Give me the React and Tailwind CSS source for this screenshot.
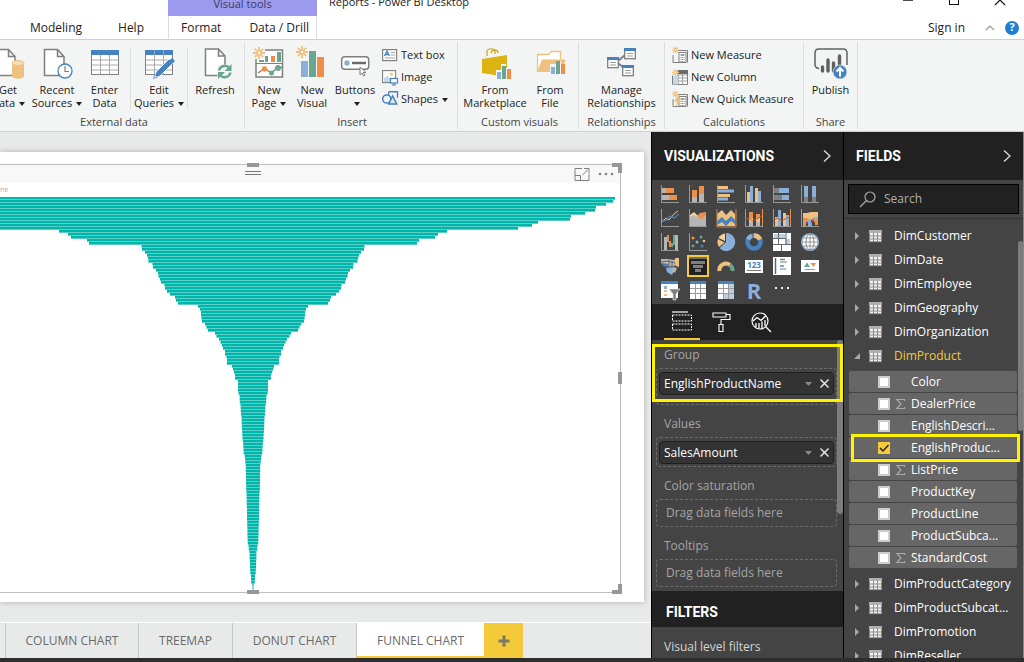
import React from "react";

/* ---------- shared colours for drawings ---------- */
const G = "#7f7f7f";
const BL = "#4682bd";
const LB = "#8ab0da";
const OR = "#ee8f45";
const PE = "#efc07f";
const GR = "#6aa58d";
const CR = "#f5d09a";
const DK = "#5f6160";

function Caret() {
  return (
    <svg className="ml-1 inline-block align-middle" width="6" height="4" viewBox="0 0 6 4" aria-hidden="true">
      <path d="M0 0h6L3 4z" fill="#222" />
    </svg>
  );
}

function Svg({ w, h, children }) {
  return (
    <svg width={w} height={h} viewBox={`0 0 ${w} ${h}`} className="block shrink-0 overflow-visible" aria-hidden="true">
      {children}
    </svg>
  );
}

function Spark({ x, y, r = 6 }) {
  const d = r * 0.7;
  return (
    <g stroke={PE} strokeWidth={r > 4 ? 1.8 : 1.2} transform={`translate(${x} ${y})`} fill="none">
      <path d={`M0 ${-r}V${r}M${-r} 0H${r}M${-d} ${-d}L${d} ${d}M${-d} ${d}L${d} ${-d}`} />
      <circle r={r * 0.3} fill="#fff" strokeWidth="1" />
    </g>
  );
}

/* ---------- ribbon icons (32 x 32) ---------- */
const page = <path d="M3.5 1.5h13l6.500 7v19H3.500zM16.500 1.500v7H23" fill="#fff" stroke={G} strokeWidth="1.5" />;

const GetIcon = () => (
  <Svg w={32} h={32}>
    {page}
    <path d="M20 15v13c0 3.500 12 3.500 12 0V15z" fill={PE} />
    <ellipse cx="26" cy="15" rx="6" ry="2.500" fill="#f7ddb2" stroke={PE} />
  </Svg>
);
const RecentIcon = () => (
  <Svg w={32} h={32}>
    {page}
    <circle cx="24" cy="23" r="7" fill="#fff" stroke={BL} strokeWidth="1.3" />
    <path d="M24 18v5.500h4" fill="none" stroke={G} strokeWidth="1.2" />
  </Svg>
);
const Grid = ({ pen }) => (
  <>
    <rect x="2.500" y="2.500" width="27" height="24" fill="#fff" stroke={G} />
    <path d="M3 12h26M3 17h26M3 22h26M11.500 6v20M20.500 6v20" stroke="#a9a9a9" fill="none" />
    <rect x="2" y="2" width="28" height="5" fill={BL} />
    {pen && <path d="M11.500 2v5M20.500 2v5" stroke="#7faad6" />}
  </>
);
const EnterIcon = () => (
  <Svg w={32} h={32}>
    <Grid />
  </Svg>
);
const EditIcon = () => (
  <Svg w={32} h={32}>
    <Grid pen />
    <path d="M11 30l2-6L26 11l4 4L17 28z" fill={BL} stroke="#f3f5f4" strokeWidth="1" />
    <path d="M26.500 12.500L29 10l3 3-2.500 2.500z" fill={BL} />
    <path d="M10.500 30.500l1.500-4 2.500 2.500z" fill="#fff" stroke={BL} strokeWidth=".8" />
  </Svg>
);
const RefreshIcon = () => (
  <Svg w={32} h={32}>
    <path d="M6.500 1h13l6.500 7v19.500H6.500zM19.500 1v7H26" fill="#fff" stroke={G} strokeWidth="1.500" />
    <rect x="18.500" y="16.500" width="14" height="14" fill="#f3f5f4" />
    <path d="M20 22.500a6 6 0 0 1 10.500-2.500M31.500 24.500a6 6 0 0 1-10.500 2.500" fill="none" stroke={GR} strokeWidth="2.400" />
    <path d="M32.500 16v7h-7zM19 31v-7h7z" fill={GR} />
  </Svg>
);
const NewPageIcon = () => (
  <Svg w={32} h={32}>
    <rect x="3" y="2" width="26.500" height="27" fill="#fff" stroke={G} strokeWidth="1.500" />
    <path d="M3 15.500h26" stroke={G} />
    <path d="M6 12h5v2H6zM12 8h3v6h-3zM24 4h4v10h-4z" fill={GR} />
    <rect x="18" y="8" width="4" height="6" fill={OR} />
    <path d="M5 25l6.500-4.500 7 4.500 6-5.500 5 0" fill="none" stroke={G} strokeWidth="1.300" />
    <circle cx="11.500" cy="21" r="2.700" fill={OR} />
    <circle cx="18.500" cy="25" r="2.500" fill={GR} />
    <circle cx="25" cy="20" r="3" fill={GR} />
    <rect x="0" y="0" width="12" height="11" fill="#f3f5f4" />
    <Spark x={6} y={5} r={6} />
  </Svg>
);
const NewVisualIcon = () => (
  <Svg w={32} h={32}>
    <rect x="5" y="13" width="7" height="16" fill={LB} />
    <rect x="13" y="3" width="7" height="26" fill={GR} />
    <rect x="21" y="9" width="7" height="20" fill={OR} />
    <Spark x={6} y={4} r={6} />
  </Svg>
);
const ButtonsIcon = () => (
  <Svg w={32} h={32}>
    <rect x="2.700" y="8.700" width="27" height="12.600" rx="3" fill="#fff" stroke={G} strokeWidth="1.500" />
    <circle cx="8" cy="15" r="2.700" fill={LB} />
    <path d="M13 15h14" stroke="#6b6b6b" strokeWidth="2.500" />
    <path d="M21 19v8l2-2 1.500 3 1.500-.8-1.500-2.700h2.500z" fill="#fff" stroke={G} />
  </Svg>
);
const MarketIcon = () => (
  <Svg w={32} h={32}>
    <path d="M8 8V3.500C8 0 16 0 16 3.500V6M12 5c1-4 7-4 7 0" fill="none" stroke="#d9ac1f" strokeWidth="1.400" />
    <path d="M3 11l25-4v22L3 25z" fill="#dcb311" />
    <path d="M17 22h5v-6h5v4h6v12H17z" fill="#f3f5f4" />
    <path d="M18 24h4v7h-4z" fill={LB} />
    <path d="M23 18h4v13h-4z" fill={GR} />
    <path d="M28 21h4v10h-4z" fill={OR} />
  </Svg>
);
const FileIcon = () => (
  <Svg w={32} h={32}>
    <path d="M3.500 24V6.500h11l3-3h9V11" fill="#fff" stroke={PE} strokeWidth="1.300" />
    <path d="M3 24L8 11.500h23.500L28 24z" fill={PE} />
    <path d="M16 16h6v-3h5v4h5v10H16z" fill="#f3f5f4" />
    <path d="M17 19h4v7h-4z" fill={LB} />
    <path d="M22 13h4v13h-4z" fill={GR} />
    <path d="M27 16h4v10h-4z" fill={OR} />
  </Svg>
);
function MiniTable({ x, y }) {
  return (
    <g transform={`translate(${x} ${y})`}>
      <rect x=".7" y=".7" width="10.600" height="10" fill="#fff" stroke={G} strokeWidth="1.300" />
      <rect width="12" height="3" fill={BL} />
      <path d="M3 5.500h6M3 8h6" stroke="#9a9a9a" />
    </g>
  );
}
const ManageIcon = () => (
  <Svg w={32} h={32}>
    <path d="M12 13l7-6M12 15l6 5" stroke={G} strokeWidth="2" />
    <MiniTable x={1} y={9} />
    <MiniTable x={18} y={0} />
    <MiniTable x={16} y={17} />
  </Svg>
);
const PublishIcon = () => (
  <Svg w={32} h={32}>
    <path d="M4 20.500c-3-.500-4-1.500-4-4V5c0-3 1-4 4-4h24c3 0 4 1 4 4v12" fill="none" stroke={DK} strokeWidth="1.500" />
    <path d="M7.500 19v4M13 12v11M18.500 15v8M24.500 8v12" stroke={DK} strokeWidth="3.400" strokeLinecap="round" />
    <circle cx="25" cy="24" r="7" fill={BL} stroke="#f3f5f4" strokeWidth=".6" />
    <path d="M25 28.500v-8M21.500 23.500l3.500-3.500 3.500 3.500" fill="none" stroke="#fff" strokeWidth="2" />
  </Svg>
);

/* ---------- ribbon icons (16 x 16) ---------- */
const TextIcon = () => (
  <Svg w={16} h={16}>
    <rect x=".6" y="2.600" width="14" height="11" fill="#fff" stroke={G} strokeWidth="1.200" />
    <path d="M9 5.500h4M9 8h4M3 11h10" stroke="#a0a0a0" />
    <path d="M2.500 9L5 4l2.500 5M3.500 7.500h3" stroke={BL} strokeWidth="1.300" fill="none" />
  </Svg>
);
const ImageIcon = () => (
  <Svg w={16} h={16}>
    <rect x=".6" y="1.600" width="13" height="12" fill="#fff" stroke={G} strokeWidth="1.100" />
    <circle cx="9.500" cy="5" r="1.500" fill={PE} />
    <path d="M2 13V9l3-2 3 2v4z" fill="#c6d9e8" />
    <rect x="8.500" y="9.500" width="7" height="4.500" fill="#fff" stroke={BL} strokeWidth="1.200" />
    <path d="M10 16h4M12 14v2" stroke={BL} />
  </Svg>
);
const ShapesIcon = () => (
  <Svg w={16} h={16}>
    <path d="M6.700 .7h8.800v6" fill="none" stroke={BL} strokeWidth="1.400" />
    <path d="M6.700 .7v3" stroke={BL} strokeWidth="1.400" />
    <circle cx="4.800" cy="8" r="4.100" fill="#f3f5f4" stroke={BL} strokeWidth="1.500" />
    <path d="M10.700 5l4 8h-8z" fill="#dbe8f4" stroke={BL} strokeWidth="1.500" />
  </Svg>
);
const MeasureIcon = ({ bolt }) => (
  <Svg w={16} h={16}>
    <path d="M1 8v7.500h6M6 3.500h9.500v12" stroke={G} fill="none" />
    <rect x="7" y="5.500" width="7" height="10" fill="#fff" stroke={G} />
    <path d="M8.500 8h4" stroke={G} strokeWidth="1.500" />
    <path d="M8.500 10.500h4M8.500 12.500h4M8.500 14.500h4" stroke={G} strokeDasharray="1 .6" />
    {bolt && <path d="M6 4L2 11h3l-1.500 5L9 9H6l2-5z" fill={PE} />}
    <Spark x={3.500} y={3} r={3.500} />
  </Svg>
);
const ColumnIcon = () => (
  <Svg w={16} h={16}>
    <path d="M.5 6.500v9h15V1.500H6v14" fill="#fff" stroke={G} />
    <rect x="1" y="7" width="5" height="8.500" fill="#c6d9e8" />
    <path d="M6 6h9M6 9h9M6 12h9M10.500 4v12" stroke="#a0a0a0" />
    <path d="M6 1h10v4H6z" fill="#6b6b6b" />
    <Spark x={3.500} y={3.500} r={3.500} />
  </Svg>
);

/* ---------- ribbon ---------- */
function BigButton({ icon, lines, caret, width }) {
  return (
    <button type="button" className={`flex shrink-0 flex-col items-center pt-1 whitespace-nowrap ${width}`}>
      {icon}
      <span className="mt-[3px] text-center leading-[13px]">
        {lines[0]}
        <br />
        {lines[1]}
        {caret && <Caret />}
      </span>
    </button>
  );
}
function SmallButton({ icon, label, caret }) {
  return (
    <button type="button" className="flex h-[22px] items-center gap-[3px] whitespace-nowrap">
      {icon}
      <span>
        {label}
        {caret && <Caret />}
      </span>
    </button>
  );
}
function Group({ title, className, children }) {
  return (
    <section className={`flex shrink-0 flex-col justify-between border-r border-[#dcdedd] pt-0.5 ${className}`}>
      <div className="flex">{children}</div>
      <h2 className="text-center leading-[14px] text-[#444]">{title}</h2>
    </section>
  );
}

function Ribbon() {
  return (
    <div className="flex h-[93px] shrink-0 overflow-hidden border-y border-[#cfd1d0] bg-[#f3f5f4] py-0.5 text-[11px] text-[#222]">
      <Group title="External data" className="-ml-[18px] w-[263px] pl-0.5">
        <BigButton width="w-12" icon={<GetIcon />} lines={["Get", "Data"]} caret />
        <BigButton width="w-[50px]" icon={<RecentIcon />} lines={["Recent", "Sources"]} caret />
        <BigButton width="w-[45px]" icon={<EnterIcon />} lines={["Enter", "Data"]} />
        <span className="mx-[3px] mt-1 border-l border-[#dcdedd]" />
        <BigButton width="w-[50px]" icon={<EditIcon />} lines={["Edit", "Queries"]} caret />
        <span className="mx-[3px] mt-1 border-l border-[#dcdedd]" />
        <BigButton width="w-12" icon={<RefreshIcon />} lines={["Refresh", ""]} />
      </Group>
      <Group title="Insert" className="w-[213px] pl-0.5">
        <BigButton width="w-11" icon={<NewPageIcon />} lines={["New", "Page"]} caret />
        <BigButton width="w-[42px]" icon={<NewVisualIcon />} lines={["New", "Visual"]} />
        <BigButton width="w-11" icon={<ButtonsIcon />} lines={["Buttons", ""]} caret />
        <div className="ml-[5px] flex flex-col">
          <SmallButton icon={<TextIcon />} label="Text box" />
          <SmallButton icon={<ImageIcon />} label="Image" />
          <SmallButton icon={<ShapesIcon />} label="Shapes" caret />
        </div>
      </Group>
      <Group title="Custom visuals" className="w-[121px] pl-[3px]">
        <BigButton width="w-[68px]" icon={<MarketIcon />} lines={["From", "Marketplace"]} />
        <BigButton width="w-[42px]" icon={<FileIcon />} lines={["From", "File"]} />
      </Group>
      <Group title="Relationships" className="w-[86px]">
        <BigButton width="w-full" icon={<ManageIcon />} lines={["Manage", "Relationships"]} />
      </Group>
      <Group title="Calculations" className="w-[139px] px-[7px]">
        <div className="flex flex-col">
          <SmallButton icon={<MeasureIcon />} label="New Measure" />
          <SmallButton icon={<ColumnIcon />} label="New Column" />
          <SmallButton icon={<MeasureIcon bolt />} label="New Quick Measure" />
        </div>
      </Group>
      <Group title="Share" className="w-[54px]">
        <BigButton width="w-full" icon={<PublishIcon />} lines={["Publish", ""]} />
      </Group>
    </div>
  );
}

function Header() {
  return (
    <header className="-mt-4 shrink-0 bg-white text-xs text-[#222]">
      <div className="flex h-8 items-end text-[11px]">
        <div className="ml-[168px] flex h-full w-[149px] items-end justify-center bg-[#9c9aef] pb-1 leading-4 text-[#3a3a66]">
          Visual tools
        </div>
        <div className="ml-3 pb-1.5 leading-4">Reports - Power BI Desktop</div>
        <div className="ml-auto flex h-full items-center gap-[34px] pr-[18px]">
          <button type="button" aria-label="Minimize">
            <Svg w={12} h={12}>
              <path d="M1 6h10" stroke="#111" strokeWidth="1.500" />
            </Svg>
          </button>
          <button type="button" aria-label="Maximize">
            <Svg w={12} h={12}>
              <rect x="1.500" y="1.500" width="9" height="9" fill="none" stroke="#111" />
            </Svg>
          </button>
          <button type="button" aria-label="Close">
            <Svg w={12} h={12}>
              <path d="M1 1l10 10M11 1L1 11" stroke="#111" strokeWidth="1.200" />
            </Svg>
          </button>
        </div>
      </div>
      <nav className="flex h-[23px] items-center">
        <div className="flex w-[168px] gap-9 pl-[30px]">
          <a href="#modeling">Modeling</a>
          <a href="#help">Help</a>
        </div>
        <div className="flex h-full w-[149px] items-center gap-7 border-x border-[#dcdcdc] pl-3">
          <a href="#format">Format</a>
          <a href="#data">Data / Drill</a>
        </div>
        <div className="ml-auto flex items-center pr-[5px]">
          <a href="#signin">Sign in</a>
          <button type="button" aria-label="Collapse ribbon" className="ml-5">
            <Svg w={10} h={8}>
              <path d="M1 6l4-4 4 4" fill="none" stroke="#999" strokeWidth="1.200" />
            </Svg>
          </button>
          <button
            type="button"
            aria-label="Help"
            className="ml-2.5 flex size-3.5 items-center justify-center rounded-full bg-[#1e7fd2] text-[11px] font-bold text-white"
          >
            ?
          </button>
        </div>
      </nav>
    </header>
  );
}

/* ---------- funnel chart ---------- */
const halfWidths = [
  362, 360, 353, 343, 342, 332, 318, 317, 285, 279, 265, 194, 185, 182, 166, 164, 111.500, 111, 108, 106, 105, 104.500,
  100.500, 100, 97, 95, 94.500, 93, 92, 88.500, 88, 86, 83, 78, 77, 75, 55, 53, 52, 52, 51.500, 51, 48, 46.500, 45, 38,
  36.500, 34, 32.500, 31, 30, 28, 28, 26.500, 26, 26, 21, 20, 19, 18, 18, 15, 15, 15, 15, 14.500, 13.400, 13.300, 13.200,
  12.500, 12.300, 12.200, 12, 11.500, 11.400, 11.300, 11.200, 11, 10.800, 10.600, 10.500, 10.200, 9.800, 9.600, 9.500, 9.200,
  8.300, 8, 7.600, 7.300, 7.200, 7.200, 7, 7, 7, 7, 6.800, 6.800, 6.600, 6.400, 6.400, 6.300, 6.300, 6.200, 6, 6, 6, 6, 5.800,
  5.800, 5.600, 5.600, 5.600, 5.400, 5.400, 5.200, 4.400, 4.200, 3.500, 3.400, 3.400, 3.200, 3, 3, 2.800, 2.600, 2, 2, 1.800,
  0.600, 0.500,
];

function Funnel() {
  return (
    <svg width="619" height="394" viewBox="0 0 619 394" className="block" role="img" aria-label="Funnel chart">
      {halfWidths.map((h, i) => (
        <rect key={i} x={253 - h} y={i * 3} width={h * 2} height="2.650" fill="#00b5aa" />
      ))}
    </svg>
  );
}

const sheets = [
  { name: "COLUMN CHART", width: "w-[133px]" },
  { name: "TREEMAP", width: "w-[94px]" },
  { name: "DONUT CHART", width: "w-[124px]" },
];

function Canvas() {
  return (
    <main className="flex min-w-0 flex-1 flex-col bg-[#e8eae9] pt-5">
      <div className="mr-[7px] flex flex-1 flex-col bg-white pt-3 pr-[23px] pb-[9px] shadow-[0_0_6px_rgba(0,0,0,0.25)]">
        <div className="relative flex-1 border-y border-r border-[#bdbdbd]">
          <div className="flex h-[18px] items-center justify-end gap-2 bg-[#f8f8f8] pr-1.5">
            <button type="button" aria-label="Focus mode">
              <Svg w={16} h={13}>
                <path d="M8 .5H1v12h14V6M1 7.500h5.500v5M8.500 7L14 1.500M10 .5h5v5" fill="none" stroke={G} />
              </Svg>
            </button>
            <button type="button" aria-label="More options">
              <Svg w={16} h={6}>
                <circle cx="2" cy="3" r="1.300" fill={G} />
                <circle cx="8" cy="3" r="1.300" fill={G} />
                <circle cx="14" cy="3" r="1.300" fill={G} />
              </Svg>
            </button>
          </div>
          <div className="h-3.5 text-[7px] leading-[14px] text-[#aaa]">ne</div>
          <Funnel />
          <span className="absolute -top-0.5 left-[247px] h-1 w-3 bg-[#979797]" />
          <span className="absolute top-1.5 left-[245px] h-1 w-4 border-y border-[#777]" />
          <span className="absolute -top-0.5 -right-0.5 size-2.5 border-t-4 border-r-4 border-[#979797]" />
          <span className="absolute top-[207px] -right-0.5 h-3 w-1 bg-[#979797]" />
          <span className="absolute -right-0.5 -bottom-0.5 size-2.5 border-r-4 border-b-4 border-[#979797]" />
          <span className="absolute -bottom-0.5 left-[247px] h-1 w-3 bg-[#979797]" />
        </div>
      </div>
      <nav className="mt-5 flex h-9 border-t border-white pl-[5px] text-xs text-[#6a6a6a]">
        {sheets.map((s) => (
          <button key={s.name} type="button" className={`border-l border-[#c6c8c7] whitespace-nowrap ${s.width}`}>
            {s.name}
          </button>
        ))}
        <button
          type="button"
          className="w-32 border-b-2 border-l border-b-[#f4c93a] border-l-[#c6c8c7] bg-white pt-0.5 whitespace-nowrap"
        >
          FUNNEL CHART
        </button>
        <button type="button" aria-label="New page" className="flex w-[39px] items-center justify-center bg-[#f4c93a]">
          <Svg w={12} h={12}>
            <path d="M6 .5v11M.5 6h11" stroke="#7b7766" strokeWidth="3" />
          </Svg>
        </button>
      </nav>
    </main>
  );
}

/* ---------- visualization icons (18 x 18) ---------- */
const V = ({ children }) => <Svg w={18} h={18}>{children}</Svg>;
const Axis = () => <path d="M.5 0v17.500H18" fill="none" stroke="#9a9a9a" />;
const S = "#b5b5b5";

const visuals = [
  ["Stacked bar", <V><Axis /><path d="M1 3h4v5H1zM1 10h7v5H1z" fill={S} /><path d="M5 3h8v5H5zM8 10h8v5H8z" fill={OR} /></V>],
  ["Stacked column", <V><Axis /><path d="M3 12h5v5H3zM10 9h5v8h-5z" fill={S} /><path d="M3 5h5v7H3zM10 1h5v8h-5z" fill={OR} /></V>],
  ["Clustered bar", <V><Axis /><path d="M1 1h10v3H1zM1 9h12v3H1z" fill={PE} /><path d="M1 4.500h16v3H1zM1 12.500h10v3H1z" fill={LB} /></V>],
  ["Clustered column", <V><Axis /><path d="M2 7h3v10H2zM10 3h3v14h-3z" fill={PE} /><path d="M5 1h3v16H5zM13 6h3v11h-3z" fill={LB} /></V>],
  ["100% stacked bar", <V><Axis /><path d="M1 3h5v5H1zM1 10h8v5H1z" fill={G} /><path d="M6 3h10v5H6zM9 10h7v5H9z" fill={LB} /></V>],
  ["100% stacked column", <V><Axis /><path d="M3 12h4v5H3zM11 12h4v5h-4z" fill={G} /><path d="M3 1h4v11H3zM11 1h4v11h-4z" fill={LB} /></V>],
  ["Line", <V><Axis /><path d="M1 13l4-4 3 2 5-6 4-3" fill="none" stroke={PE} /><path d="M1 10l3 2 5-5 4 2 5-4" fill="none" stroke={BL} strokeWidth="1.200" /></V>],
  ["Area", <V><Axis /><path d="M1 7l4-3 3 3 3-3 6-1v8H1z" fill={OR} /><path d="M1 7l4-2 7 5 5-3v10H1z" fill={S} /><path d="M1 6l4-3 4 4-2 1-2-2-4 2z" fill={CR} /></V>],
  ["Stacked area", <V><path d="M0 17V5l5-4 4 5 5-5 4 4v12z" fill={PE} /><path d="M0 12l5-4 4 4 5-5 4 4v4l-4-3-5 5-4-4-5 3z" fill={BL} /><path d="M0 0v18h19V0" fill="none" stroke="#c58b4d" /></V>],
  ["Line and stacked column", <V><Axis /><path d="M4 3h4v7H4zM11 5h4v5h-4z" fill={OR} /><path d="M4 9h4v8H4zM11 9h4v8h-4z" fill={PE} /><path d="M4 13h4v4H4zM11 13h4v4h-4z" fill={S} /><path d="M0 11l4-2 4 3 9-5" stroke="#c5592a" fill="none" /><path d="M17.500 0v17" stroke={OR} /></V>],
  ["Line and clustered column", <V><Axis /><path d="M2 8h3v9H2zM10 4h3v13h-3z" fill={PE} /><path d="M5 1h3v16H5zM13 6h3v11h-3z" fill={LB} /><path d="M0 12l4-3 5 3 8-5" stroke="#c5592a" fill="none" /><path d="M17.500 0v17" stroke={OR} /></V>],
  ["Ribbon", <V><Axis /><path d="M2 4h4l4-1h7v6h-4l-4 2H2z" fill={PE} /><path d="M2 9h4l3 2 4-2h4v7h-3v-3h-3v4H7v-4H5v4H2z" fill={OR} /><path d="M2 12h3v3H2zM7 10h3v4H7zM13 8h4v3h-4zM7 15h3v2H7z" fill={LB} /><path d="M5 13h2v2H5zM10 11h3v3h-3z" fill="#9c3f35" /></V>],
  ["Waterfall", <V><Axis /><path d="M3 4h3v13H3zM14 2h3v15h-3z" fill={S} /><path d="M6 2h2v7H6zM8 8h2v6H8z" fill={OR} /><path d="M10 10h2v4h-2zM12 2h2v10h-2z" fill={GR} /></V>],
  ["Scatter", <V><Axis /><circle cx="4" cy="5" r="1.600" fill={OR} /><circle cx="12" cy="4" r="1.500" fill={GR} /><circle cx="8" cy="9" r="1.500" fill={LB} /><circle cx="15" cy="8" r="1.300" fill={PE} /><circle cx="4" cy="13" r="1.400" fill={GR} /><circle cx="13" cy="13" r="1.600" fill={BL} /></V>],
  ["Pie", <V><path d="M9 9V0a9 9 0 1 1-6.500 15z" fill={LB} /><path d="M8 8V.5A8.500 8.500 0 0 0 1.500 5z" fill={CR} /><path d="M7.500 9.500L1 6a9 9 0 0 0 1 8z" fill={PE} /></V>],
  ["Donut", <V><circle cx="9" cy="9" r="6.500" fill="none" stroke={BL} strokeWidth="4.500" /><path d="M9 2.500a6.500 6.500 0 0 1 6 4" fill="none" stroke={PE} strokeWidth="4.500" /><path d="M3 6.500a6.500 6.500 0 0 1 4-3.700" fill="none" stroke={LB} strokeWidth="4.500" /></V>],
  ["Treemap", <V><path d="M0 0h18v18H0z" fill="#fff" /><path d="M1 1h4v4H1zM6 1h6v4H6zM6 6h11v5h-5V6z" fill="#bccfe0" /><path d="M5.500 0v11M0 5.500h13M13 0v11M0 11.500h18M8.500 11v7" stroke="#626a70" fill="none" /></V>],
  ["Map", <V><circle cx="9" cy="9" r="8.300" fill="#fff" stroke={LB} strokeWidth="1.500" /><ellipse cx="9" cy="9" rx="4" ry="8" fill="none" stroke={G} strokeWidth=".9" /><path d="M9 1v16M1 9h16M2.500 5h13M2.500 13h13" stroke={G} strokeWidth=".8" /></V>],
  ["Filled map", <V><path d="M0 2h7l7 1 1 5-4 3-6-1-5-4z" fill={S} /><path d="M1 6l6 1 1 4-5-1z" fill={BL} /><path d="M14 1h4v9l-3-1-1-4z" fill={PE} /><path d="M5 11l6-1 3 2-3 6-5-3z" fill={LB} /><path d="M12 10l4 1-2 5-3-2z" fill={S} /><path d="M0 5l7-1 7 2M1 9l7 1 6-1M8 3v8M11 4v7" stroke="#555" strokeWidth=".8" fill="none" /></V>],
  ["Funnel", <V><path d="M0 0h18v2H0z" fill="#6d6d6d" /><path d="M2 4h14v3H2zM4 8h10v3H4zM6 12h6v3H6z" fill={G} /></V>],
  ["Gauge", <V><path d="M2.500 14a6.500 6.500 0 0 1 10.500-6" fill="none" stroke={PE} strokeWidth="4" /><path d="M13 8a6.500 6.500 0 0 1 2.500 6" fill="none" stroke={GR} strokeWidth="4" /></V>],
  ["Card", <V><path d="M0 3h18v13H0z" fill="#fff" /><text x="9" y="10.500" textAnchor="middle" fontSize="8" fontWeight="700" fill={BL} fontFamily="Open Sans">123</text><path d="M2 13.500h14" stroke="#777" /></V>],
  ["Multi-row card", <V><path d="M0 0h18v18H0z" fill="#fff" /><path d="M2.500 1v16" stroke="#666" strokeWidth="1.500" /><path d="M7 2.500h5M7 9h4" stroke={G} strokeWidth="1.500" /><path d="M7 5h7M7 12h6" stroke={LB} strokeWidth="1.500" /></V>],
  ["KPI", <V><path d="M0 3h18v12H0z" fill="#fff" /><path d="M3 10l3-4.500L9 10z" fill={GR} /><path d="M9.500 6H15l-2.500 4z" fill={OR} /><path d="M4 12.500h10" stroke="#999" /></V>],
  ["Slicer", <V><path d="M0 0h17v17H0z" fill="#fff" /><path d="M0 0h17v3H0z" fill={BL} /><path d="M3 5h3v3H3z" fill={LB} /><path d="M3 9h3v2H3zM3 13h3v2H3z" fill={PE} /><path d="M8 8h11l-4 5v6h-3v-6z" fill={G} stroke="#eee" strokeWidth=".6" /></V>],
  ["Table", <V><path d="M1 1h16v17H1z" fill="#fff" /><path d="M1 0h16v3H1z" fill={BL} /><path d="M1 7.500h16M1 12.500h16M6.500 3v15M11.500 3v15" stroke="#9a9a9a" /></V>],
  ["Matrix", <V><path d="M1 1h16v17H1z" fill="#fff" /><path d="M1 0h16v3H1z" fill={BL} /><path d="M12 3h5v10h-5zM6 13h11v5H6z" fill="#bccfe0" /><path d="M1 7.500h16M1 12.500h16M6.500 3v15M11.500 3v15" stroke="#9a9a9a" /></V>],
  ["R script", <span className="text-[22px] leading-4 font-bold text-[#8ab0da]">R</span>],
  ["More visuals", <V><path d="M2 6h2v2H2zM8 6h2v2H8zM14 6h2v2h-2z" fill="#eee" /></V>],
];

function Chevron() {
  return (
    <Svg w={8} h={12}>
      <path d="M1 .5l6 5.500-6 5.500" fill="none" stroke="#ddd" strokeWidth="1.300" />
    </Svg>
  );
}

function PaneTitle({ title }) {
  return (
    <div className="flex h-12 shrink-0 items-center justify-between bg-[#212121] px-3">
      <h2 className="font-[Roboto,sans-serif] text-sm font-bold text-white">{title}</h2>
      <button type="button" aria-label={`Collapse ${title}`}>
        <Chevron />
      </button>
    </div>
  );
}

function Well({ label, field, tall }) {
  return (
    <section className="mb-1">
      <h3 className="flex h-7 items-center px-2 pt-0.5 text-[#a5a5a5]">{label}</h3>
      <div
        className={`rounded-sm border border-dashed border-[#6c6c6c] ${tall ? "h-[37px] p-0.5 pt-[3px]" : field ? "h-[30px] p-0.5 pt-[3px]" : "flex h-7 items-center px-[9px] text-[#a5a5a5]"}`}
      >
        {field ? (
          <div className="flex h-[23px] items-center rounded-sm border border-[#1f1f1f] bg-[#333] pl-1 text-white">
            <span>{field}</span>
            <button type="button" aria-label={`${field} options`} className="ml-auto">
              <Svg w={7} h={4}>
                <path d="M0 0h7L3.500 4z" fill="#8a8a8a" />
              </Svg>
            </button>
            <button type="button" aria-label={`Remove ${field}`} className="mr-1 ml-2">
              <Svg w={9} h={9}>
                <path d="M.5.5l8 8M8.500.5l-8 8" stroke="#eee" strokeWidth="1.400" />
              </Svg>
            </button>
          </div>
        ) : (
          "Drag data fields here"
        )}
      </div>
    </section>
  );
}

function Visualizations() {
  return (
    <aside className="flex w-[193px] shrink-0 flex-col overflow-hidden border-x border-black bg-[#444] text-xs">
      <PaneTitle title="VISUALIZATIONS" />
      <div className="grid h-[124px] shrink-0 grid-cols-[repeat(6,28px)] grid-rows-[repeat(5,24px)] py-0.5 pl-1">
        {visuals.map(([name, icon]) => (
          <button
            key={name}
            type="button"
            aria-label={name}
            className={`flex items-center justify-center ${name === "Funnel" ? "mx-[3px] my-px border-2 border-[#f4c93a] bg-[#212121]" : ""}`}
          >
            {icon}
          </button>
        ))}
      </div>
      <div className="flex h-9 shrink-0 gap-1 bg-[#212121] px-3">
        <button type="button" aria-label="Fields" className="flex w-9 items-center justify-center border-b-2 border-[#f4c93a]">
          <Svg w={20} h={20}>
            <path d="M0 1h16" stroke="#fff" strokeWidth="1.200" />
            <path d="M.5 4h19v6H.5zM.5 13h19v6H.5z" fill="none" stroke="#fff" strokeDasharray="2 1" />
          </Svg>
        </button>
        <button type="button" aria-label="Format" className="flex w-9 items-center justify-center">
          <Svg w={20} h={20}>
            <path d="M1 1h13v4H1zM14 2.500h4v5H9v5M7 12.500h4v7H7z" fill="none" stroke="#fff" strokeWidth="1.100" />
          </Svg>
        </button>
        <button type="button" aria-label="Analytics" className="flex w-9 items-center justify-center">
          <Svg w={20} h={20}>
            <circle cx="8" cy="9" r="8" fill="none" stroke="#fff" strokeWidth="1.200" />
            <path d="M1 9l4-3.500 4 3 5-5M13.500 14.500L19 20M4 15v-4M7 16.500V11M10 16.500v-7M13 14V8" fill="none" stroke="#fff" strokeWidth="1.300" />
          </Svg>
        </button>
      </div>
      <div className="relative h-[251px] shrink-0 pr-[6px] pl-1">
        <span className="absolute top-0 right-0 h-[174px] w-[6px] rounded-full bg-[#7c7c7c]" />
        <Well label="Group" field="EnglishProductName" tall />
        <Well label="Values" field="SalesAmount" />
        <Well label="Color saturation" />
        <Well label="Tooltips" />
        <span className="pointer-events-none absolute inset-x-0 top-1 h-[58px] border-3 border-[#fff200]" />
      </div>
      <h2 className="flex h-9 shrink-0 items-center bg-[#212121] px-3.5 pt-1.5 font-[Roboto,sans-serif] text-sm font-bold text-white">
        FILTERS
      </h2>
      <p className="px-3 pt-3 leading-4 text-[#d5d5d5]">Visual level filters</p>
    </aside>
  );
}

function TableRow({ name, open }) {
  return (
    <button type="button" className="flex h-6 w-full shrink-0 items-center pl-2.5 text-left">
      <Svg w={6} h={8}>
        <path d={open ? "M6 1v6H0z" : "M1 0l4 4-4 4z"} fill="#a8a8a8" />
      </Svg>
      <span className="ml-[9px]">
        <Svg w={13} h={12}>
          <path d="M0 0h13v12H0z" fill="#f2f2f2" />
          <path d="M0 0h13v3H0z" fill="#b0b0b0" />
          <path d="M0 6h13M0 9h13M4.500 3v9M8.500 3v9M.5 3v9M12.500 3v9M0 11.700h13" stroke="#888" />
        </Svg>
      </span>
      <span className={`ml-3 ${open ? "text-[#f4c93a]" : "text-white"}`}>{name}</span>
    </button>
  );
}

function FieldRow({ name, sum, checked }) {
  return (
    <label className="relative flex h-[21px] items-center rounded-xs bg-[#666] pl-[29px] text-white">
      <input
        type="checkbox"
        defaultChecked={checked}
        className="size-3 appearance-none border-2 border-[#ccc] bg-white checked:border-[#f4c93a] checked:bg-[#f4c93a]"
      />
      {checked && (
        <span className="pointer-events-none absolute left-[31px]">
          <Svg w={9} h={8}>
            <path d="M0 4l3 3 5.500-6" fill="none" stroke="#222" strokeWidth="1.500" />
          </Svg>
        </span>
      )}
      <span className="flex w-[21px] justify-center">
        {sum && (
          <Svg w={9} h={10}>
            <path d="M8.500 2V.5H.8L5 5 .8 9.500h7.700V8" fill="none" stroke="#aaa" strokeWidth="1.200" />
          </Svg>
        )}
      </span>
      {name}
      {checked && (
        <span className="pointer-events-none absolute -top-[3px] -right-[3px] left-0.5 z-10 h-7 border-3 border-[#fff200]" />
      )}
    </label>
  );
}

function Fields() {
  return (
    <aside className="relative flex w-45 shrink-0 flex-col overflow-hidden border-r border-[#3d9be0] bg-[#444] text-xs">
      <PaneTitle title="FIELDS" />
      <label className="mx-1 mt-1 flex h-[30px] shrink-0 items-center gap-2 border border-black bg-[#212121] pr-2.5 pl-[11px]">
        <Svg w={16} h={16}>
          <circle cx="10" cy="6" r="5" fill="none" stroke="#aaa" strokeWidth="1.200" />
          <path d="M6.500 9.500L0 16" stroke="#aaa" strokeWidth="1.200" />
        </Svg>
        <input
          type="search"
          aria-label="Search fields"
          placeholder="Search"
          className="w-0 flex-1 bg-transparent outline-none placeholder:text-[#b0b0b0]"
        />
      </label>
      <div className="mt-1 flex min-h-0 flex-1 flex-col overflow-hidden border-t border-[#333] pt-[5px]">
        {["DimCustomer", "DimDate", "DimEmployee", "DimGeography", "DimOrganization"].map((n) => (
          <TableRow key={n} name={n} />
        ))}
        <TableRow name="DimProduct" open />
        <div className="mt-[3px] mr-1.5 mb-1 ml-[5px] flex flex-col gap-px">
          <FieldRow name="Color" />
          <FieldRow name="DealerPrice" sum />
          <FieldRow name="EnglishDescri..." />
          <FieldRow name="EnglishProduc..." checked />
          <FieldRow name="ListPrice" sum />
          <FieldRow name="ProductKey" />
          <FieldRow name="ProductLine" />
          <FieldRow name="ProductSubca..." />
          <FieldRow name="StandardCost" sum />
        </div>
        {["DimProductCategory", "DimProductSubcat...", "DimPromotion", "DimReseller"].map((n) => (
          <TableRow key={n} name={n} />
        ))}
      </div>
      <span className="absolute top-[109px] right-0 h-[190px] w-[5px] rounded-full bg-[#7c7c7c]" />
    </aside>
  );
}

export default function App() {
  return (
    <div className="flex h-screen flex-col overflow-hidden bg-white font-['Open_Sans','Noto_Sans',sans-serif]">
      <Header />
      <Ribbon />
      <div className="flex min-h-0 flex-1">
        <Canvas />
        <Visualizations />
        <Fields />
      </div>
      <footer className="h-1 shrink-0 bg-[#2e2e2e]" />
    </div>
  );
}
